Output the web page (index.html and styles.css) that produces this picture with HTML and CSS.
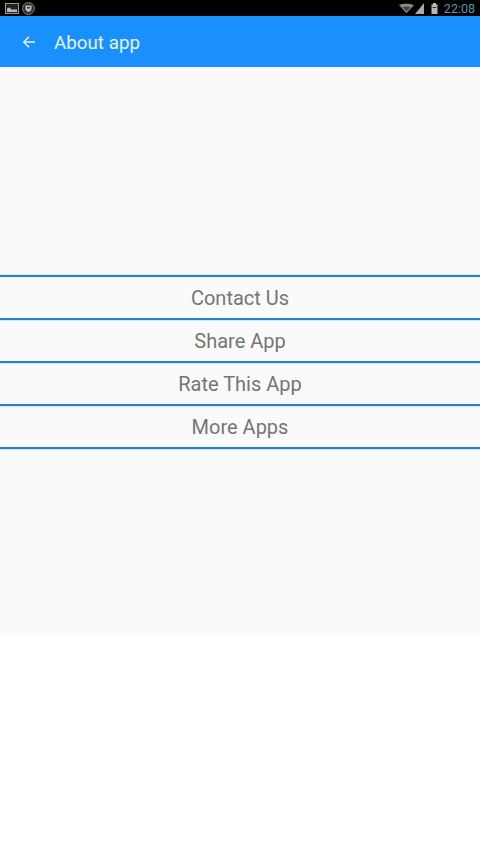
FILE: index.html
```html
<!DOCTYPE html>
<html lang="en">
  <head>
    <meta charset="UTF-8" />
    <meta name="viewport" content="width=device-width, initial-scale=1.0" />
    <title>About app</title>
    <link rel="stylesheet" href="styles.css">
  </head>
  <body>
    <div class="status-bar">
      <div class="status-left">
        <svg class="icon-picture" width="14" height="11" viewBox="0 0 14 11">
          <rect x="0.5" y="0.5" width="13" height="10" fill="#222" stroke="#999" />
          <path d="M2 9V5.5l2.5-1 2 2H12V9z" fill="#bbb" />
        </svg>
        <svg class="icon-shield" width="13" height="13" viewBox="0 0 13 13">
          <circle cx="6.5" cy="6.5" r="6" fill="#333" stroke="#777" />
          <path d="M3.5 3.5h6v3c0 2-1.500 3-3 3.500-1.500-.5-3-1.500-3-3.500z" fill="#bbb" />
          <rect x="5" y="5" width="3" height="1.500" fill="#333" />
        </svg>
      </div>
      <div class="status-right">
        <svg class="icon-wifi" width="15" height="11" viewBox="0 0 17 11">
          <path d="M0 1.500C5 -.5 12 -.5 17 1.500L8.500 11z" fill="#8a8a8a" />
          <path d="M4 4c3-1 6-1 9 0l-4.500 5z" fill="#444" />
        </svg>
        <svg class="icon-signal" width="11" height="11" viewBox="0 0 9 11">
          <path d="M0 11L9 0v11z" fill="#a8a8a8" />
        </svg>
        <svg class="icon-battery" width="7" height="11" viewBox="0 0 7 11">
          <rect x="2" y="0" width="3" height="2" fill="#b8b8b8" />
          <rect x="0.500" y="1.500" width="6" height="9.500" fill="#b8b8b8" />
          <rect x="1.500" y="4" width="4" height="1" fill="#333" />
        </svg>
        <span class="clock">22:08</span>
      </div>
    </div>

    <header class="app-bar">
      <svg class="back-arrow" width="14" height="14" viewBox="0 0 14 14">
        <path d="M13 7H2M7 1.800L1.800 7 7 12.200" fill="none" stroke="#e6f4ff" stroke-width="1.500" />
      </svg>
      <h1 class="app-title">About app</h1>
    </header>

    <main class="content">
      <ul class="menu">
        <li class="menu-item">Contact Us</li>
        <li class="menu-item">Share App</li>
        <li class="menu-item">Rate This App</li>
        <li class="menu-item">More Apps</li>
      </ul>
    </main>
  </body>
</html>
```

FILE: styles.css
```css
* {
  box-sizing: border-box;
}

body {
  margin: 0;
  height: 854px;
  background-color: #ffffff;
  font-family: Roboto, "Liberation Sans", sans-serif;
  overflow: hidden;
}

.status-bar {
  height: 16px;
  background-color: #000000;
  display: flex;
  justify-content: space-between;
  align-items: center;
  padding: 0 5px;
}

.status-left,
.status-right {
  display: flex;
  align-items: center;
}

.status-left {
  gap: 3px;
}

.icon-signal {
  margin-right: 6px;
}

.clock {
  margin-left: 6px;
  color: #5f96a8;
  font-size: 12.500px;
}

.app-bar {
  height: 51px;
  background-color: #1a90ff;
  display: flex;
  align-items: center;
  padding-left: 22px;
}

.back-arrow {
  margin-right: 18px;
}

.app-title {
  margin: 2px 0 0;
  color: #e6f4ff;
  font-size: 18.800px;
  font-weight: 400;
}

.content {
  height: 568px;
  background-color: #fafafa;
  padding-top: 208px;
}

.menu {
  list-style: none;
  margin: 0;
  padding: 0;
  border-top: 2px solid #2383c9;
  box-shadow: 0 -1px 0 #cfeaff;
}

.menu-item {
  height: 43px;
  border-bottom: 2px solid #2383c9;
  box-shadow: 0 1px 0 #cfeaff;
  display: flex;
  align-items: center;
  justify-content: center;
  color: #757575;
  font-size: 20px;
}
```
